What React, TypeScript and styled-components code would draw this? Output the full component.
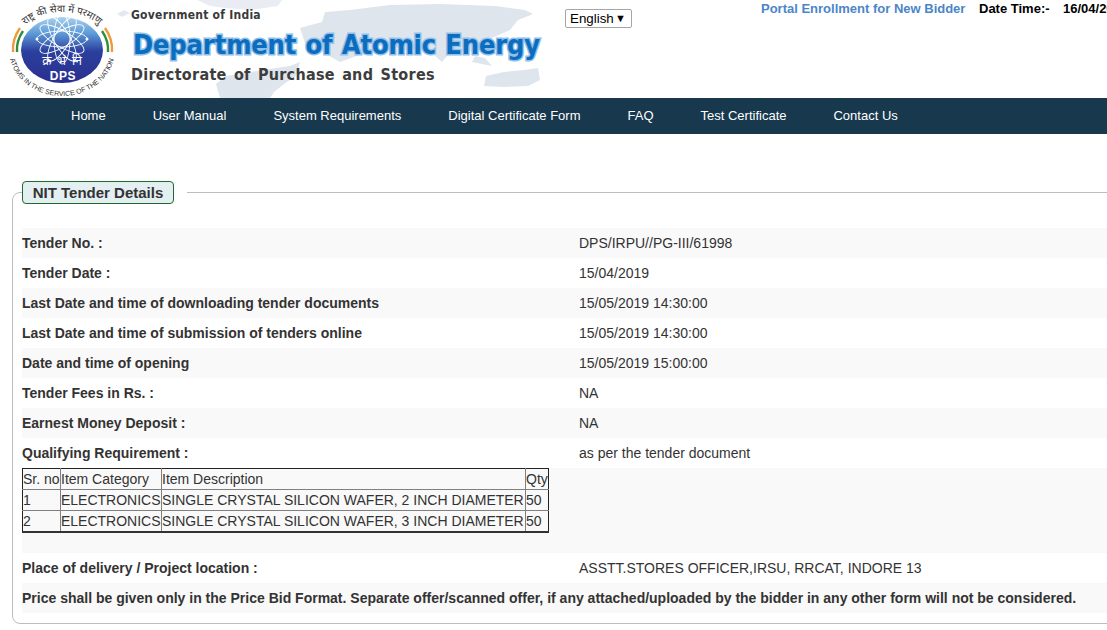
import React from "react";
import styled, { createGlobalStyle } from "styled-components";

const Global = createGlobalStyle`
  html, body { margin: 0; padding: 0; background: #fff; }
  body { font-family: "Liberation Sans", Arial, sans-serif; font-size: 14px; color: #333; width: 1107px; height: 630px; overflow: hidden; }
`;
const Page = styled.div`width: 1107px; height: 630px; overflow: hidden;`;
const Header = styled.header`display: flex; height: 98px; width: 1107px; overflow: hidden;`;
const LogoSlot = styled.div`flex: 0 0 125px; height: 98px;`;
const Brand = styled.div`position: relative; flex: 0 0 440px; min-width: 0; height: 98px; padding: 8px 0 0 6px; box-sizing: border-box;`;
const MapArt = styled.svg`position: absolute; left: -25px; top: 0; width: 465px; height: 98px;`;
const Gov = styled.div`position: relative; font: bold 12px/15px "DejaVu Sans", sans-serif; font-stretch: condensed; color: #3a3a3a; letter-spacing: 0.25px; height: 15px;`;
const Title = styled.div`
  position: relative; margin: 4px 0 0 2px; font: bold 27px/36px "DejaVu Sans", sans-serif; font-stretch: condensed; color: #0c6cbd; white-space: nowrap;
  -webkit-text-stroke: 3px #8fc0ea; paint-order: stroke fill; letter-spacing: -0.15px; word-spacing: 1px;
`;
const Sub = styled.div`position: relative; margin-top: 2px; font: bold 16px/20px "DejaVu Sans", sans-serif; font-stretch: condensed; color: #3d3d3d; white-space: nowrap; letter-spacing: 0.28px; word-spacing: 2px;`;
const LangWrap = styled.div`flex: 0 0 196px; padding-top: 9px;`;
const Lang = styled.div`
  height: 17px; border: 1px solid #a6a6a6; border-radius: 2px; background: #fff; color: #000;
  display: flex; align-items: center; justify-content: space-between; padding: 0 5px 0 4px; width: 56px; font-size: 13.33px;
`;
const Arrow = styled.span`font-size: 11px; line-height: 1;`;
const TopRight = styled.div`display: flex; align-items: flex-start; flex: none; white-space: nowrap; font-weight: bold; line-height: 16px; padding-top: 1px;`;
const PortalLink = styled.a`color: #4a86c8; font-size: 13px; width: 218px;`;
const DateLabel = styled.span`color: #000; font-size: 13px; width: 84px;`;
const DateValue = styled.span`color: #000; font-size: 13px;`;
const Nav = styled.nav`height: 36px; background: #17384d; display: flex; align-items: center; gap: 47px; padding: 0 0 1px 71px; box-sizing: border-box; margin-bottom: 47px;`;
const NavLink = styled.a`color: #fff; font-size: 13px; line-height: 16px; white-space: nowrap;`;
const Field = styled.fieldset`
  margin: 0 0 0 12px; padding: 0 0 9px 9px; width: 1130px; min-width: 0; height: 443px; box-sizing: border-box;
  border: 1px solid #bdbdbd; border-radius: 8px;
`;
const Legend = styled.legend`padding: 0 13px 0 0; margin: 0;`;
const LegendBox = styled.div`
  height: 21px; width: 150px; border: 1px solid #1f6a2e; border-radius: 4px; background: #e3eff0;
  display: flex; align-items: center; justify-content: center; font-weight: bold; font-size: 15px; color: #333;
`;
const Rows = styled.div`margin-top: 24px;`;
const Row = styled.div<{ $shade: boolean }>`
  display: grid; grid-template-columns: 557px 1fr; align-items: center; height: 30px; background: ${p => (p.$shade ? "#f9f9f9" : "#fff")};
`;
const Label = styled.div`font-weight: bold; white-space: nowrap;`;
const Value = styled.div`white-space: nowrap;`;
const TableRow = styled.div`height: 85px; background: #f9f9f9; box-sizing: border-box;`;
const ItemTable = styled.table`
  border-collapse: collapse; table-layout: fixed; width: 527px; font-size: 14px; color: #333;
  tr:first-child td { border-top: 1px solid #222; }
  tr:last-child td { border-bottom: 2px solid #333; }
  td:first-child { border-left: 1px solid #222; }
  td:last-child { border-right: 1px solid #222; }
`;
const Cell = styled.td<{ $w?: number }>`
  border: 1px solid #808080; padding: 0; height: 20px; line-height: 19px; white-space: nowrap; overflow: visible;
  width: ${p => (p.$w ? `${p.$w}px` : "auto")};
`;
const Note = styled.div`height: 30px; line-height: 30px; background: #f9f9f9; font-weight: bold; white-space: nowrap;`;

const rows: [string, string][] = [
  ["Tender No. :", "DPS/IRPU//PG-III/61998"],
  ["Tender Date :", "15/04/2019"],
  ["Last Date and time of downloading tender documents", "15/05/2019 14:30:00"],
  ["Last Date and time of submission of tenders online", "15/05/2019 14:30:00"],
  ["Date and time of opening", "15/05/2019 15:00:00"],
  ["Tender Fees in Rs. :", "NA"],
  ["Earnest Money Deposit :", "NA"],
  ["Qualifying Requirement :", "as per the tender document"],
];
const navs = ["Home", "User Manual", "System Requirements", "Digital Certificate Form", "FAQ", "Test Certificate", "Contact Us"];

const Logo = () => (
  <svg width="125" height="98" viewBox="0 0 125 98">
    <defs>
      <linearGradient id="disc" x1="0" y1="0" x2="0" y2="1">
        <stop offset="0" stopColor="#a9d3ef" />
        <stop offset="0.25" stopColor="#5d9ad8" />
        <stop offset="0.52" stopColor="#2b3f9e" />
        <stop offset="1" stopColor="#2a2f8e" />
      </linearGradient>
      <path id="topArc" d="M15 46 A47 34 0 0 1 109 46" />
      <path id="botArc" d="M9 50 A53 46 0 0 0 115 50" />
    </defs>
    <path d="M13 52 A50 42 0 0 1 20 28" fill="none" stroke="#ef9a3c" strokeWidth="2.4" />
    <path d="M17 52 A46 38 0 0 1 23 31" fill="none" stroke="#2f8f3a" strokeWidth="2.4" />
    <path d="M112 52 A50 42 0 0 0 105 28" fill="none" stroke="#ef9a3c" strokeWidth="2.4" />
    <path d="M108 52 A46 38 0 0 0 102 31" fill="none" stroke="#2f8f3a" strokeWidth="2.4" />
    <ellipse cx="62" cy="50" rx="41" ry="33" fill="url(#disc)" />
    <g fill="none" stroke="#fff" strokeWidth="0.9">
      {[0, 30, 60, 90, 120, 150].map(a => (
        <ellipse key={a} cx="62" cy="39" rx="25" ry="8" transform={`rotate(${a} 62 39)`} />
      ))}
    </g>
    <g fill="#fff">
      {[0, 60, 120, 180, 240, 300].map(a => (
        <circle key={a} cx={62 + 25 * Math.cos((a * Math.PI) / 180)} cy={39 + 25 * Math.sin((a * Math.PI) / 180)} r="1.5" />
      ))}
    </g>
    <text x="62" y="65" textAnchor="middle" fill="#fff" fontSize="12" wordSpacing="3" fontFamily="'Noto Sans', 'DejaVu Sans', sans-serif">क्र भं नि</text>
    <text x="63" y="80" textAnchor="middle" fill="#fff" fontSize="12" fontWeight="bold" letterSpacing="0.6" fontFamily="'Liberation Sans', sans-serif">DPS</text>
    <text fill="#333" fontSize="10" fontFamily="'Noto Sans', 'DejaVu Sans', sans-serif">
      <textPath href="#topArc" startOffset="50%" textAnchor="middle">राष्ट्र की सेवा में परमाणु</textPath>
    </text>
    <text fill="#333" fontSize="7" fontFamily="'Liberation Sans', sans-serif">
      <textPath href="#botArc" startOffset="50%" textAnchor="middle">ATOMS IN THE SERVICE OF THE NATION</textPath>
    </text>
  </svg>
);

const WorldMap = () => (
  <MapArt viewBox="0 0 465 98">
    <g fill="#dfe5ed">
      <path d="M17 14 L24 10 L30 13 L22 17 Z" fill="#e4e9f0" />
      <path d="M97 0 L135 0 L182 0 L178 6 L150 10 L125 8 L110 6 Z" fill="#e9edf3" />
      <path d="M120 98 L116 84 L126 76 L150 72 L176 68 L190 66 L200 62 L196 76 L184 84 L174 92 L170 98 Z" />
      <path d="M200 28 L222 22 L225 12 L250 10 L290 5 L340 4 L395 6 L425 10 L433 14 L418 20 L410 30 L392 38 L376 52 L352 50 L342 62 L326 48 L305 50 L285 44 L262 54 L240 62 L222 52 L206 46 Z" />
      <path d="M372 62 L392 66 L385 58 L375 56 Z" />
      <path d="M384 86 L386 76 L404 72 L424 70 L438 68 L440 80 L428 86 L404 87 Z" />
    </g>
  </MapArt>
);

export default function App() {
  return (
    <Page>
      <Global />
      <Header>
        <LogoSlot><Logo /></LogoSlot>
        <Brand>
          <WorldMap />
          <Gov>Government of India</Gov>
          <Title>Department of Atomic Energy</Title>
          <Sub>Directorate of Purchase and Stores</Sub>
        </Brand>
        <LangWrap>
          <Lang>English<Arrow>▼</Arrow></Lang>
        </LangWrap>
        <TopRight>
          <PortalLink>Portal Enrollment for New Bidder</PortalLink>
          <DateLabel>Date Time:-</DateLabel>
          <DateValue>16/04/2019</DateValue>
        </TopRight>
      </Header>
      <Nav>{navs.map(n => <NavLink key={n}>{n}</NavLink>)}</Nav>
      <Field>
        <Legend><LegendBox>NIT Tender Details</LegendBox></Legend>
        <Rows>
          {rows.map(([l, v], i) => (
            <Row key={l} $shade={i % 2 === 0}>
              <Label>{l}</Label>
              <Value>{v}</Value>
            </Row>
          ))}
          <TableRow>
            <ItemTable>
              <tbody>
                <tr><Cell $w={37}>Sr. no</Cell><Cell $w={100}>Item Category</Cell><Cell $w={363}>Item Description</Cell><Cell $w={22}>Qty</Cell></tr>
                <tr><Cell>1</Cell><Cell>ELECTRONICS</Cell><Cell>SINGLE CRYSTAL SILICON WAFER, 2 INCH DIAMETER</Cell><Cell>50</Cell></tr>
                <tr><Cell>2</Cell><Cell>ELECTRONICS</Cell><Cell>SINGLE CRYSTAL SILICON WAFER, 3 INCH DIAMETER</Cell><Cell>50</Cell></tr>
              </tbody>
            </ItemTable>
          </TableRow>
          <Row $shade={false}>
            <Label>Place of delivery / Project location :</Label>
            <Value>ASSTT.STORES OFFICER,IRSU, RRCAT, INDORE 13</Value>
          </Row>
          <Note>Price shall be given only in the Price Bid Format. Separate offer/scanned offer, if any attached/uploaded by the bidder in any other form will not be considered.</Note>
        </Rows>
      </Field>
    </Page>
  );
}
